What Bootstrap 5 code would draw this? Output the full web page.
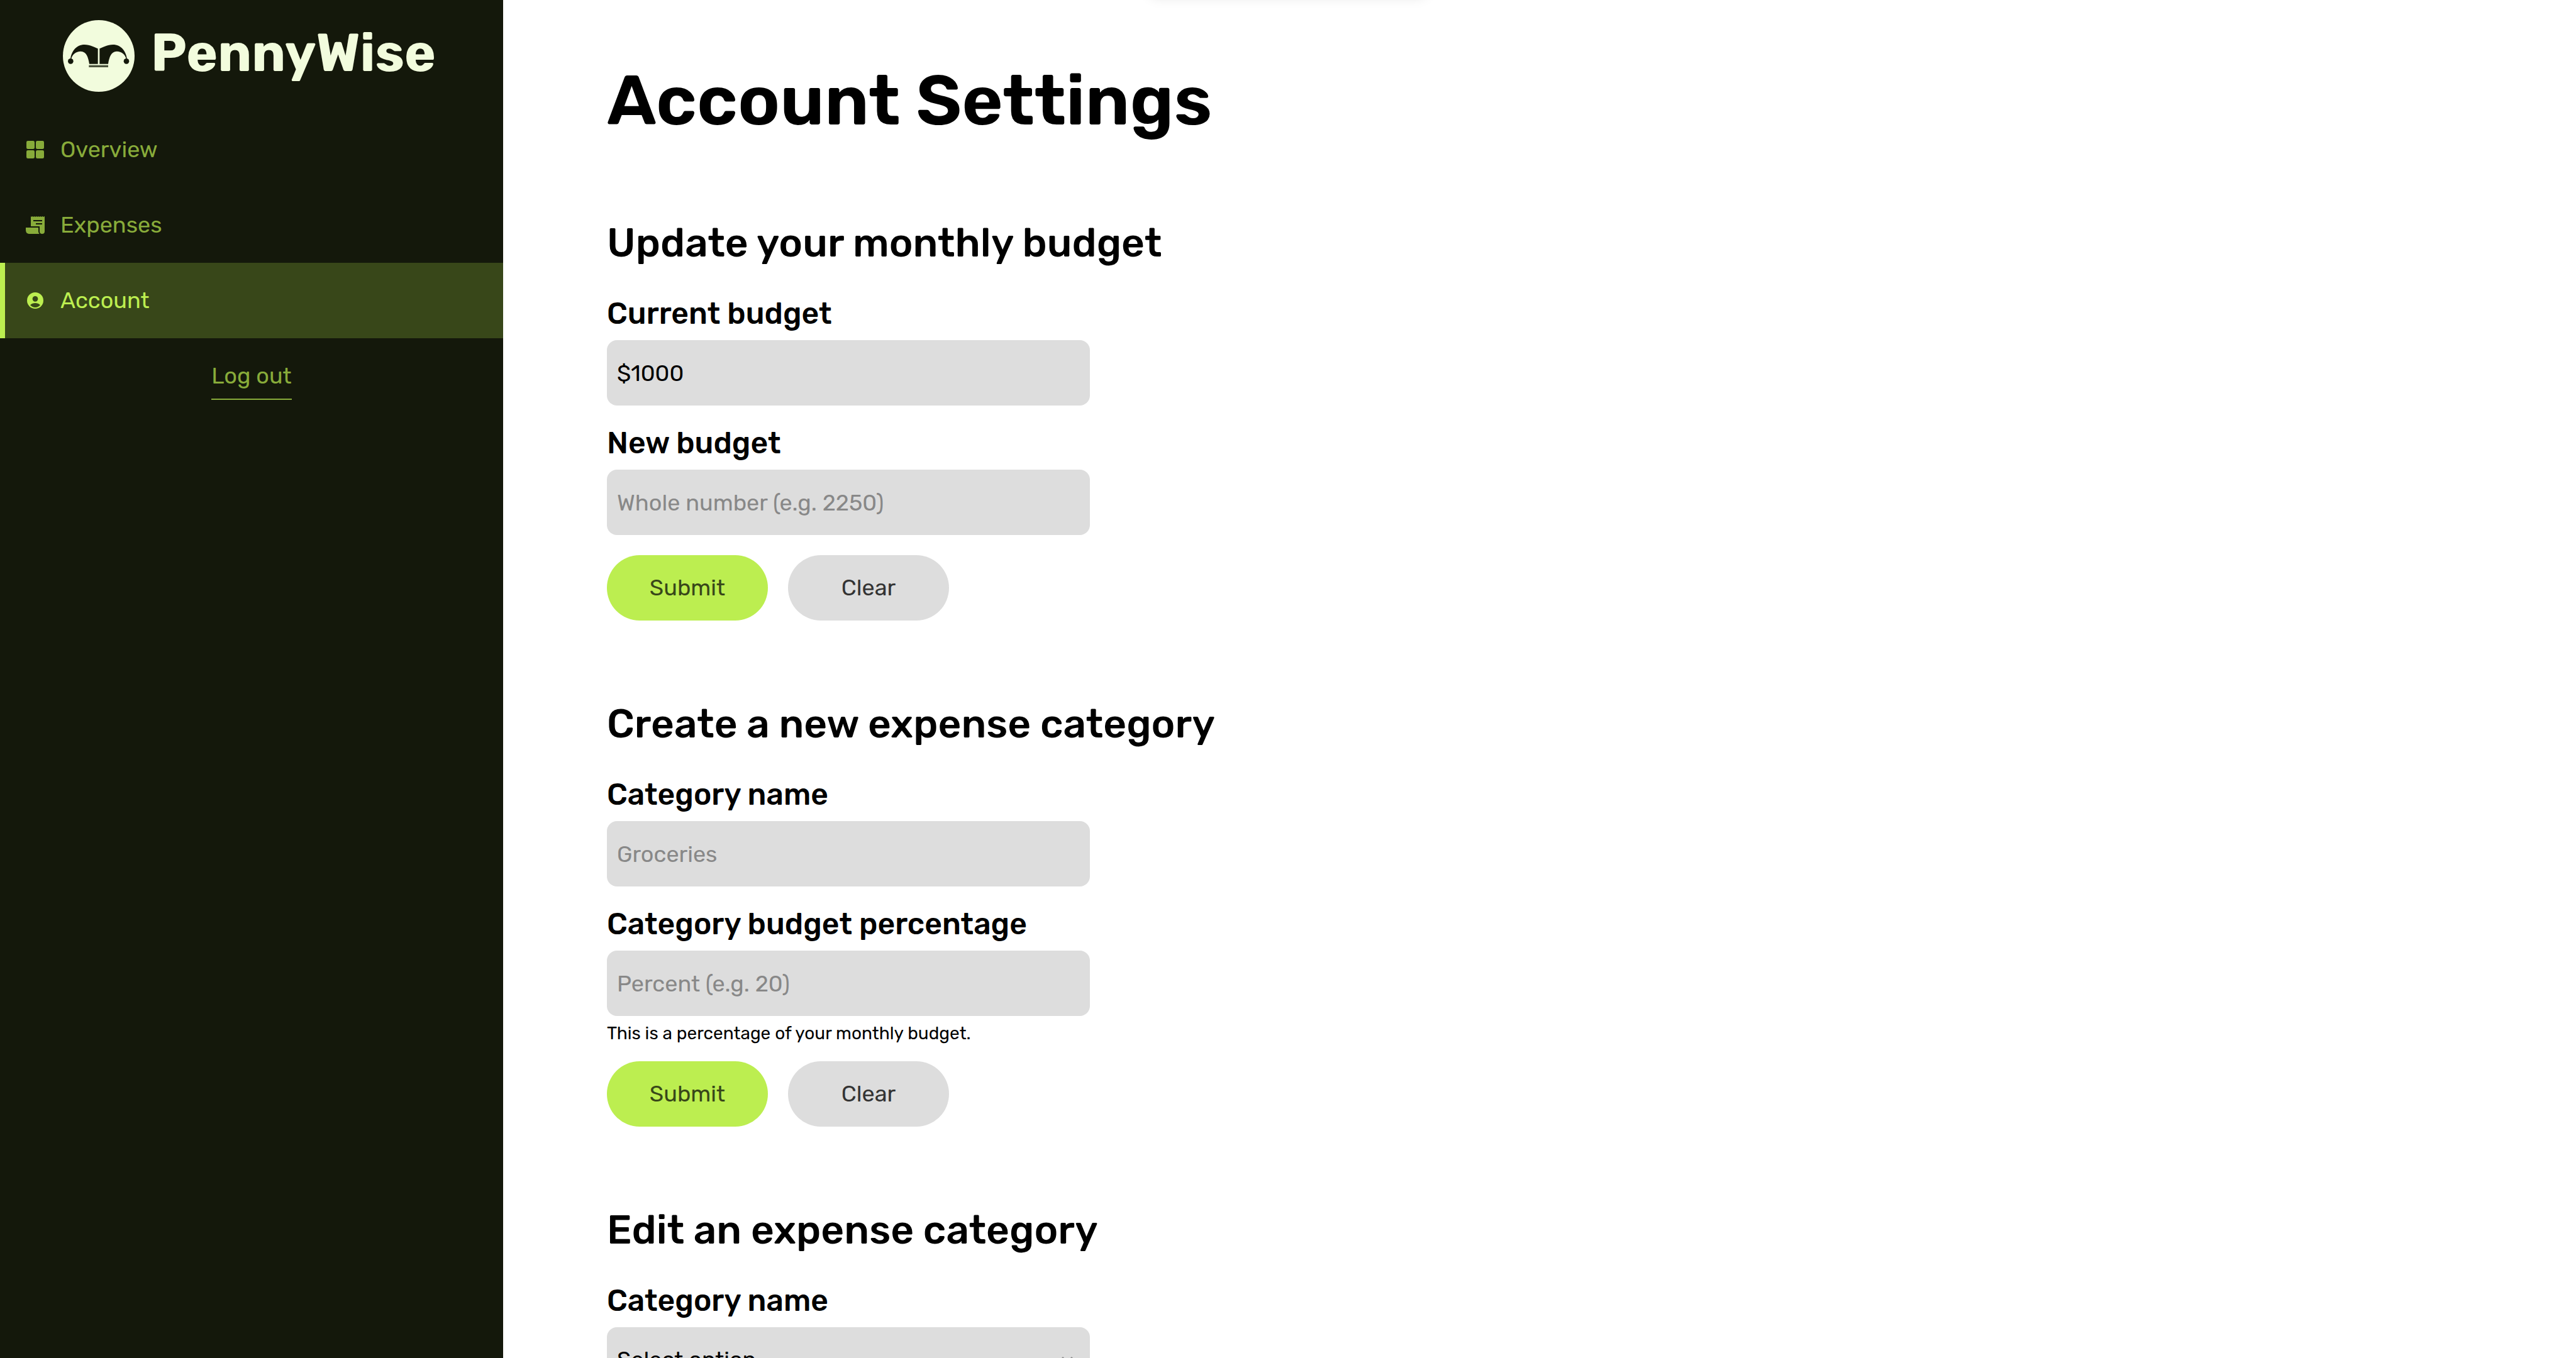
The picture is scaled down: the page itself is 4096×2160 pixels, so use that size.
<!DOCTYPE html>
<html lang="en">
<head>
<meta charset="utf-8">
<meta name="viewport" content="width=device-width, initial-scale=1">
<title>PennyWise - Account Settings</title>
<link rel="stylesheet" href="https://cdn.jsdelivr.net/npm/bootstrap@5.3.0/dist/css/bootstrap.min.css">
<style>
  :root { --lime: #bcee50; --olive: #88ab3a; --moss: #384719; --night: #14180b; --cream: #f2fcdd; --grey: #ddd; }
  body { font-family: Rubik, Inter, "Liberation Sans", sans-serif; font-size: 36px; line-height: 48px; color: #000; background: #fff; }

  .side-panel { width: 800px; background: var(--night); }
  .brand-link { height: 178px; padding: 32px 0 0 100px; gap: 26px; color: var(--cream); }
  .brand-logo { width: 114px; height: 114px; }
  .brand-name { font-size: 84px; font-weight: 700; line-height: 104px; }
  .side-link { height: 120px; padding: 0 32px; gap: 24px; border-left: 8px solid transparent; border-radius: 0; color: var(--olive); }
  .side-link:hover { color: var(--lime); }
  .side-link.active { color: var(--lime); background: var(--moss); border-color: var(--lime); }
  .side-link svg { width: 32px; height: 32px; }
  .logout-link { margin-top: 24px; line-height: 72px; color: var(--olive); border-bottom: 2px solid var(--olive); }

  .settings-main { padding: 92px 165px; scrollbar-width: none; }
  .page-title { font-size: 112px; font-weight: 600; line-height: 136px; margin-bottom: 122px; }
  .settings-section { margin-bottom: 128px; }
  .section-title { font-size: 64px; font-weight: 500; line-height: 73px; margin-bottom: 48px; }
  .field-group { max-width: 768px; margin-bottom: 32px; }
  .field-group.has-hint { margin-bottom: 24px; }
  .field-label { font-size: 48px; font-weight: 500; line-height: 56px; margin-bottom: 14px; display: block; }
  .field-box, .field-box:focus, .field-box[readonly] { height: 104px; padding: 0 16px; font-size: 36px; color: #000; background-color: var(--grey); border: 0; border-radius: 16px; }
  .field-box::placeholder { color: #888; opacity: 1; }
  .field-select { background-image: url("data:image/svg+xml,%3Csvg xmlns='http://www.w3.org/2000/svg' viewBox='0 0 20 12'%3E%3Cpath d='M2 2l8 8 8-8' fill='none' stroke='%23888' stroke-width='3'/%3E%3C/svg%3E"); background-size: 20px 12px; background-position: right 26px center; }
  .field-hint { font-size: 28px; line-height: 40px; margin-top: 8px; }
  .action-row { gap: 32px; }
  .action-btn { width: 256px; height: 104px; font-size: 36px; border: 0; }
  .btn-lime, .btn-lime:hover { background: var(--lime); color: var(--moss); }
  .btn-plain, .btn-plain:hover { background: var(--grey); color: #333; }

  .toast-slot { top: -90px; width: 444px; height: 80px; background: #fff; border-radius: 16px; box-shadow: 0 6px 20px rgba(0,0,0,.1), 0 6px 6px rgba(0,0,0,.05); }
</style>
</head>
<body>
<div class="d-flex vh-100 overflow-hidden position-relative">
  <aside class="side-panel flex-shrink-0 d-flex flex-column">
    <a href="#" class="brand-link d-flex align-items-start text-decoration-none" aria-label="PennyWise">
      <svg class="brand-logo flex-shrink-0" viewBox="60 36 342 342" aria-hidden="true">
        <circle cx="231" cy="207" r="171" fill="#f2fcdd"/>
        <g fill="#14180b">
          <path d="M96 222C100 185 125 153 163 153C190 153 212 166 227 172V245H186C181 213 172 185 145 185C122 185 104 200 99 224z"/>
          <path d="M366 222C362 185 337 153 299 153C272 153 250 166 235 172V245H276C281 213 290 185 317 185C340 185 358 200 363 224z"/>
          <circle cx="97" cy="232" r="13"/><circle cx="363" cy="232" r="13"/>
        </g>
        <path fill="#4b523d" d="M184 251h92v10h-92z"/>
      </svg>
      <span class="brand-name">PennyWise</span>
    </a>
    <nav class="nav flex-column">
      <a href="#" class="side-link d-flex align-items-center text-decoration-none">
        <svg viewBox="60 66 96 96" fill="currentColor" aria-hidden="true"><rect x="66" y="72" width="39" height="39" rx="7"/><rect x="111" y="72" width="39" height="39" rx="7"/><rect x="66" y="117" width="39" height="39" rx="7"/><rect x="111" y="117" width="39" height="39" rx="7"/></svg>
        <span>Overview</span>
      </a>
      <a href="#" class="side-link d-flex align-items-center text-decoration-none">
        <svg viewBox="60 426 96 96" fill="currentColor" aria-hidden="true"><path fill-rule="evenodd" d="M87 432l3 3 4-3 5 3 4-3 5 3 5-3 5 3 4-3 5 3 5-3 5 3 5-3 5 3 6-3V504Q153 516 141 516Q129 516 129 504V480H87zM99 450v6h42v-6zM111 465v6h30v-6z"/><path d="M63 486H123V504Q123 511 128 516H77Q63 514 63 498z"/></svg>
        <span>Expenses</span>
      </a>
      <a href="#" class="side-link active d-flex align-items-center text-decoration-none" aria-current="page">
        <svg viewBox="60 786 96 96" aria-hidden="true"><circle cx="108" cy="834" r="39" fill="currentColor"/><circle cx="108" cy="826" r="13" fill="#384719"/><path fill="#384719" d="M84 856Q94 846 108 846Q122 846 132 856Q122 867 108 867Q94 867 84 856z"/></svg>
        <span>Account</span>
      </a>
    </nav>
    <a href="#" class="logout-link align-self-center text-decoration-none">Log out</a>
  </aside>

  <main class="settings-main flex-grow-1 overflow-auto">
    <h1 class="page-title">Account Settings</h1>

    <form class="settings-section">
      <h2 class="section-title">Update your monthly budget</h2>
      <div class="field-group">
        <label class="field-label" for="currentBudget">Current budget</label>
        <input class="form-control field-box" id="currentBudget" type="text" value="$1000" readonly>
      </div>
      <div class="field-group">
        <label class="field-label" for="newBudget">New budget</label>
        <input class="form-control field-box" id="newBudget" type="text" placeholder="Whole number (e.g. 2250)">
      </div>
      <div class="d-flex action-row">
        <button type="submit" class="btn btn-lime action-btn rounded-pill">Submit</button>
        <button type="reset" class="btn btn-plain action-btn rounded-pill">Clear</button>
      </div>
    </form>

    <form class="settings-section">
      <h2 class="section-title">Create a new expense category</h2>
      <div class="field-group">
        <label class="field-label" for="categoryName">Category name</label>
        <input class="form-control field-box" id="categoryName" type="text" placeholder="Groceries">
      </div>
      <div class="field-group has-hint">
        <label class="field-label" for="categoryPercent">Category budget percentage</label>
        <input class="form-control field-box" id="categoryPercent" type="text" placeholder="Percent (e.g. 20)" aria-describedby="percentHint">
        <div class="field-hint" id="percentHint">This is a percentage of your monthly budget.</div>
      </div>
      <div class="d-flex action-row">
        <button type="submit" class="btn btn-lime action-btn rounded-pill">Submit</button>
        <button type="reset" class="btn btn-plain action-btn rounded-pill">Clear</button>
      </div>
    </form>

    <form class="settings-section">
      <h2 class="section-title">Edit an expense category</h2>
      <div class="field-group">
        <label class="field-label" for="editCategory">Category name</label>
        <select class="form-select field-box field-select" id="editCategory"><option>Select option</option></select>
      </div>
    </form>
  </main>

  <div class="toast-slot position-absolute start-50 translate-middle-x"></div>
</div>
<script src="https://cdn.jsdelivr.net/npm/bootstrap@5.3.0/dist/js/bootstrap.bundle.min.js"></script>
</body>
</html>
